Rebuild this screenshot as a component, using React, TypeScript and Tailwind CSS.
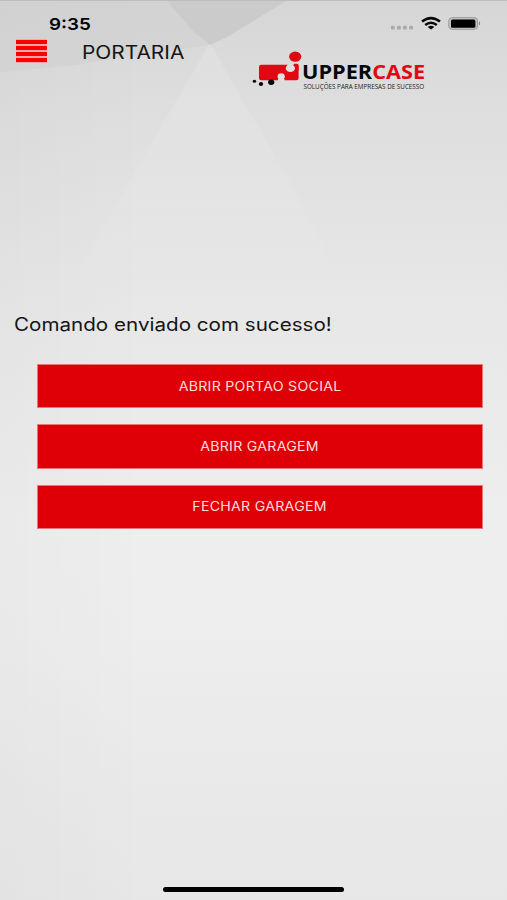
import React from "react";

const actions = ["ABRIR PORTAO SOCIAL", "ABRIR GARAGEM", "FECHAR GARAGEM"];

function Backdrop() {
  return (
    <svg className="absolute inset-0 -z-10 h-full w-full" viewBox="0 0 507 900" preserveAspectRatio="none" aria-hidden="true">
      <defs>
        <linearGradient id="base" x1="0" y1="0" x2="0" y2="1">
          <stop offset="0" stopColor="#d6d6d6" />
          <stop offset="0.12" stopColor="#dedede" />
          <stop offset="0.33" stopColor="#e7e7e7" />
          <stop offset="0.58" stopColor="#eeeeee" />
          <stop offset="0.72" stopColor="#ededed" />
          <stop offset="0.88" stopColor="#e9e9e9" />
          <stop offset="1" stopColor="#e7e7e7" />
        </linearGradient>
        <linearGradient id="side" x1="0" y1="0" x2="1" y2="0">
          <stop offset="0" stopColor="#000" stopOpacity="0.018" />
          <stop offset="0.3" stopColor="#000" stopOpacity="0" />
        </linearGradient>
        <linearGradient id="ray" x1="0" y1="0" x2="0" y2="1">
          <stop offset="0" stopColor="#fff" stopOpacity="0.14" />
          <stop offset="1" stopColor="#fff" stopOpacity="0" />
        </linearGradient>
      </defs>
      <rect width="507" height="900" fill="url(#base)" />
      <rect width="507" height="900" fill="url(#side)" />
      <path d="M0 0H166L210 45L75 65L0 72Z" fill="#d1d1d1" fillOpacity="0.6" />
      <path d="M210 43L55 310H355L300 200Z" fill="url(#ray)" />
      <path d="M166 0H288L227 37L210 45L195 33Z" fill="#cbcbcb" />
      <path d="M0 0H507V1H0Z" fill="#bdbdbd" />
    </svg>
  );
}

function StatusBar() {
  return (
    <div className="flex h-[37px] justify-between pl-[49px] pr-[26px]">
      <span className="mt-[14px] h-5 origin-left scale-x-[1.14] text-[16.5px] font-semibold leading-5 text-black">9:35</span>
      <svg className="mt-[14px] h-[18px] w-[91px]" viewBox="390 14 91 18" aria-label="Status">
        <g fill="#aaa">
          <rect x="391" y="25.8" width="3.8" height="3.8" rx="1.2" />
          <rect x="397" y="25.8" width="3.8" height="3.8" rx="1.2" />
          <rect x="403" y="25.8" width="3.8" height="3.8" rx="1.2" />
          <rect x="409.2" y="25.8" width="3.8" height="3.8" rx="1.2" />
        </g>
        <g fill="none" stroke="#080808" strokeWidth="2.5">
          <path d="M422 21.6Q431 14.6 440 21.6" />
          <path d="M425.2 25Q431 20.4 436.8 25" />
        </g>
        <path d="M427.7 27Q431 24.5 434.3 27L431 29.6Z" fill="#080808" />
        <rect x="448.8" y="17.7" width="28.8" height="11.6" rx="3.3" fill="#c4c4c4" stroke="#999" />
        <rect x="451" y="19.4" width="24.4" height="8.4" rx="1.5" fill="#000" />
        <path d="M479 21.3Q481.3 23.4 479 25.5Z" fill="#888" />
      </svg>
    </div>
  );
}

function Logo() {
  return (
    <div className="ml-auto mr-[82px] mt-[13px] flex h-[42px] w-[174px] shrink-0">
      <svg className="h-[42px] w-[51px] shrink-0" viewBox="251 50 51 42" aria-hidden="true">
        <rect x="259" y="64.8" width="39.6" height="15.4" rx="2.2" fill="#e20710" />
        <path d="M294 63.8H297Q298.6 63.8 298.6 66V70H294Z" fill="#e20710" />
        <ellipse cx="290.4" cy="68.3" rx="4.6" ry="3.8" fill="#e0e0e0" />
        <path d="M287.5 64H292.5V67H287.5Z" fill="#e0e0e0" />
        <ellipse cx="295.2" cy="56.6" rx="6.1" ry="5.2" fill="#e20710" />
        <ellipse cx="281.2" cy="76.5" rx="3.6" ry="3.2" fill="#e0e0e0" />
        <path d="M278 79L284.5 79V81H278Z" fill="#e0e0e0" />
        <ellipse cx="271.2" cy="82.3" rx="3.1" ry="2.7" fill="#080808" />
        <ellipse cx="261" cy="84" rx="2.2" ry="1.9" fill="#080808" />
        <ellipse cx="254.4" cy="81.2" rx="1.8" ry="1.5" fill="#080808" />
      </svg>
      <div className="flex flex-col pt-[13px] font-['Open_Sans','Noto_Sans',sans-serif]">
        <div className="flex h-[18px] w-max origin-left scale-x-[1.085] text-[20px] leading-[18px] font-bold text-[#080808]">
          UPPER<span className="text-[#e20710]">CASE</span>
        </div>
        <div className="mt-[2px] h-2 w-max origin-left translate-x-[1.5px] scale-x-[0.967] text-[6.5px] leading-2 whitespace-nowrap text-[#222]">SOLUÇÕES PARA EMPRESAS DE SUCESSO</div>
      </div>
    </div>
  );
}

function MenuButton() {
  return (
    <button aria-label="Menu" className="mt-[2px] flex h-6 w-[31px] shrink-0 flex-col justify-between bg-[#f5a7a7] py-[0.5px]">
      <span className="h-[4px] w-full bg-[#fb0000]" />
      <span className="h-[4px] w-full bg-[#fb0000]" />
      <span className="h-[4px] w-full bg-[#fb0000]" />
      <span className="h-[4px] w-full bg-[#fb0000]" />
    </button>
  );
}

export default function App() {
  return (
    <div className="relative isolate flex h-[900px] w-[507px] flex-col overflow-hidden font-['Inter','Liberation_Sans',sans-serif]">
      <Backdrop />
      <StatusBar />
      <header className="flex h-[75px] items-start pl-4">
        <MenuButton />
        <h1 className="ml-[35px] mt-[3px] origin-left scale-x-[1.16] text-[18px] leading-[25px] text-[#151515]">PORTARIA</h1>
        <Logo />
      </header>
      <main className="flex flex-1 flex-col pt-[200px]">
        <p className="ml-[13.5px] w-max origin-left scale-x-[1.145] text-[18px] leading-[25px] text-[#151515]">Comando enviado com sucesso!</p>
        <div className="ml-[37px] mr-6 mt-[27px] flex flex-col gap-4">
          {actions.map((label) => (
            <button key={label} className="flex h-[44.25px] items-center justify-center border border-[#e8777a] bg-[#df0007] pt-[1.5px] text-[12.5px] text-[#ffdede]">
              <span className="scale-x-[1.13] tracking-[0.25px]">{label}</span>
            </button>
          ))}
        </div>
      </main>
      <div className="mb-2 h-[5px] w-[181px] self-center rounded-full bg-black" />
    </div>
  );
}
